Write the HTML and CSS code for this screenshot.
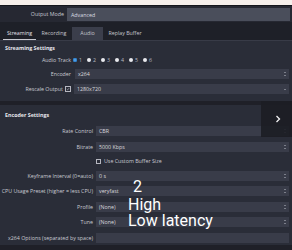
FILE: index.html
```html
<!DOCTYPE html>
<html>
<head>
<meta charset="utf-8">
<link rel="stylesheet" href="styles.css">
</head>
<body>
<div class="top"></div>
<div class="mode-row">
  <span class="mode-label">Output Mode</span>
  <div class="mode-combo">Advanced</div>
</div>
<div class="tabs">
  <div class="tab active">Streaming</div>
  <div class="tab">Recording</div>
  <div class="tab hover">Audio</div>
  <div class="tab">Replay Buffer</div>
</div>
<div class="panel">
  <section class="group g1">
    <div class="gtitle">Streaming Settings</div>
    <div class="rows">
      <div class="row r-audio">
        <span class="lbl">Audio Track</span>
        <div class="radios">
          <span class="radio sel"></span><span class="num">1</span>
          <span class="radio"></span><span class="num">2</span>
          <span class="radio"></span><span class="num">3</span>
          <span class="radio"></span><span class="num">4</span>
          <span class="radio"></span><span class="num">5</span>
          <span class="radio"></span><span class="num">6</span>
        </div>
      </div>
      <div class="row">
        <span class="lbl">Encoder</span>
        <div class="field">x264<svg class="spin" viewBox="0 0 4 8"><path d="M1 3 L2 2 L3 3 M1 5 L2 6 L3 5" /></svg></div>
      </div>
      <div class="row r-rescale">
        <span class="lbl">Rescale Output <span class="check on"><svg viewBox="0 0 6 6"><path d="M1.2 3.1 L2.5 4.3 L4.8 1.6" /></svg></span></span>
        <div class="field">1280x720<svg class="spin" viewBox="0 0 4 8"><path d="M1 4 L2 5 L3 4" /></svg></div>
      </div>
    </div>
  </section>
  <section class="group g2">
    <div class="gtitle">Encoder Settings</div>
    <div class="rows">
      <div class="row">
        <span class="lbl">Rate Control</span>
        <div class="field">CBR<svg class="spin" viewBox="0 0 4 8"><path d="M1 3 L2 2 L3 3 M1 5 L2 6 L3 5" /></svg></div>
      </div>
      <div class="row">
        <span class="lbl">Bitrate</span>
        <div class="field">5000 Kbps<svg class="spin" viewBox="0 0 4 8"><path d="M1 3 L2 2 L3 3 M1 5 L2 6 L3 5" /></svg></div>
      </div>
      <div class="row r-check">
        <span class="lbl"></span>
        <div class="checkline"><span class="check"></span>Use Custom Buffer Size</div>
      </div>
      <div class="row">
        <span class="lbl">Keyframe Interval (0=auto)</span>
        <div class="field">0 s<svg class="spin" viewBox="0 0 4 8"><path d="M1 3 L2 2 L3 3 M1 5 L2 6 L3 5" /></svg></div>
      </div>
      <div class="row">
        <span class="lbl">CPU Usage Preset (higher = less CPU)</span>
        <div class="field">veryfast<svg class="spin" viewBox="0 0 4 8"><path d="M1 3 L2 2 L3 3 M1 5 L2 6 L3 5" /></svg></div>
      </div>
      <div class="row">
        <span class="lbl">Profile</span>
        <div class="field">(None)<svg class="spin" viewBox="0 0 4 8"><path d="M1 3 L2 2 L3 3 M1 5 L2 6 L3 5" /></svg></div>
      </div>
      <div class="row">
        <span class="lbl">Tune</span>
        <div class="field">(None)<svg class="spin" viewBox="0 0 4 8"><path d="M1 3 L2 2 L3 3 M1 5 L2 6 L3 5" /></svg></div>
      </div>
      <div class="row">
        <span class="lbl">x264 Options (separated by space)</span>
        <div class="field"></div>
      </div>
    </div>
  </section>
</div>
<div class="side-toggle"><svg viewBox="0 0 6 8"><path d="M1.5 1 L4.5 4 L1.5 7" /></svg></div>
<div class="note note-2">2</div>
<div class="note note-profile">
  <div class="note-line">High</div>
  <div class="note-line">Low latency</div>
</div>
</body>
</html>
```
FILE: styles.css
```css
html, body {
  margin: 0;
  padding: 0;
}
body {
  width: 292px;
  height: 250px;
  overflow: hidden;
  position: relative;
  background: #1f2028;
  font-family: "Open Sans", "Noto Sans", sans-serif;
  font-size: 5.3px;
  color: #c9cad2;
}
.top {
  height: 5px;
  background: #f6efeb;
  border-bottom: 1px solid #15161c;
}
.mode-row {
  display: flex;
  align-items: center;
  height: 16px;
  background: #262832;
  padding: 0 2px 0 0;
  box-sizing: border-box;
}
.mode-label {
  width: 67px;
  text-align: right;
  padding-right: 3px;
  box-sizing: border-box;
}
.mode-combo {
  flex: 1;
  height: 13px;
  margin-top: 1px;
  background: #4a4e5b;
  display: flex;
  align-items: center;
  padding-left: 4px;
  color: #dcdce2;
}
.tabs {
  display: flex;
  align-items: flex-end;
  height: 18px;
  background: #1e2028;
  border-bottom: 1px solid #383b47;
  padding-left: 3px;
  gap: 2px;
}
.tab {
  height: 13px;
  line-height: 12px;
  padding: 0 3px;
  color: #c5c6ce;
  box-sizing: border-box;
}
.tab.active {
  width: 33px;
  text-align: center;
  border-bottom: 1.5px solid #c9cad2;
  color: #e3e3e8;
}
.tab:nth-child(2) { width: 32px; text-align: center; }
.tab.hover {
  width: 31px;
  text-align: center;
  background: #3b3e4b;
}
.tab:nth-child(4) { width: 40px; text-align: center; }
.panel {
  display: flex;
  flex-direction: column;
  gap: 4px;
}
.group {
  background: #2a2d38;
  padding: 3px 3px 0 0;
}
.g1 { height: 60px; box-sizing: border-box; }
.g2 { padding-top: 6px; height: 140px; box-sizing: border-box; }
.gtitle {
  font-weight: 700;
  color: #e6e6ec;
  line-height: 8px;
  padding-left: 5px;
}
.rows {
  display: flex;
  flex-direction: column;
}
.g1 .rows { gap: 5px; margin-top: 3px; }
.g2 .rows { gap: 5.5px; margin-top: 7px; }
.row {
  display: flex;
  align-items: center;
  height: 10px;
}
.g1 .lbl { width: 71px; }
.g2 .lbl { width: 93px; }
.lbl {
  text-align: right;
  flex: none;
  display: flex;
  justify-content: flex-end;
  align-items: center;
  white-space: nowrap;
}
.g1 .row .field { margin-left: 4px; }
.g2 .row .field { margin-left: 3px; }
.field {
  flex: 1;
  height: 10px;
  background: #393c49;
  display: flex;
  align-items: center;
  padding-left: 3px;
  color: #d9d9df;
  position: relative;
}
.spin {
  position: absolute;
  right: 2px;
  top: 1px;
  width: 4px;
  height: 8px;
  fill: none;
  stroke: #9a9ca6;
  stroke-width: 0.7;
}
.r-audio { height: 9px; }
.radios {
  display: flex;
  align-items: center;
  margin-left: 2px;
}
.radio {
  width: 4px;
  height: 4px;
  border-radius: 50%;
  background: #e9e9ee;
  margin-right: 2px;
}
.radio.sel {
  background: #5aa8e8;
  box-shadow: inset 0 0 0 1px #2c7fcf;
}
.num {
  width: 8px;
  color: #b9bac2;
}
.check {
  width: 6px;
  height: 6px;
  border: 0.8px solid #b6b7c0;
  box-sizing: border-box;
  display: inline-block;
  margin-left: 2px;
}
.check svg {
  display: block;
  width: 100%;
  height: 100%;
  fill: none;
  stroke: #e0e0e6;
  stroke-width: 0.8;
}
.r-rescale .field { margin-left: 3px !important; }
.r-check { height: 8px; }
.checkline {
  display: flex;
  align-items: center;
  margin-left: 3px;
  gap: 3px;
}
.checkline .check { margin-left: 0; width: 5px; height: 5px; }
.side-toggle {
  position: absolute;
  left: 261px;
  top: 101px;
  width: 31px;
  height: 36px;
  background: rgba(28, 29, 35, 0.9);
  display: flex;
  align-items: center;
  justify-content: center;
}
.side-toggle svg {
  width: 6px;
  height: 8px;
  margin-left: 3px;
  fill: none;
  stroke: #f2f2f4;
  stroke-width: 1.3;
}
.note {
  position: absolute;
  font-family: Roboto, "Liberation Sans", sans-serif;
  font-size: 16px;
  color: #ffffff;
}
.note-2 { left: 133px; top: 179px; line-height: 16px; height: 16px; }
.note-profile { left: 128px; top: 197px; }
.note-line {
  height: 16px;
  line-height: 16px;
  white-space: nowrap;
}
```
